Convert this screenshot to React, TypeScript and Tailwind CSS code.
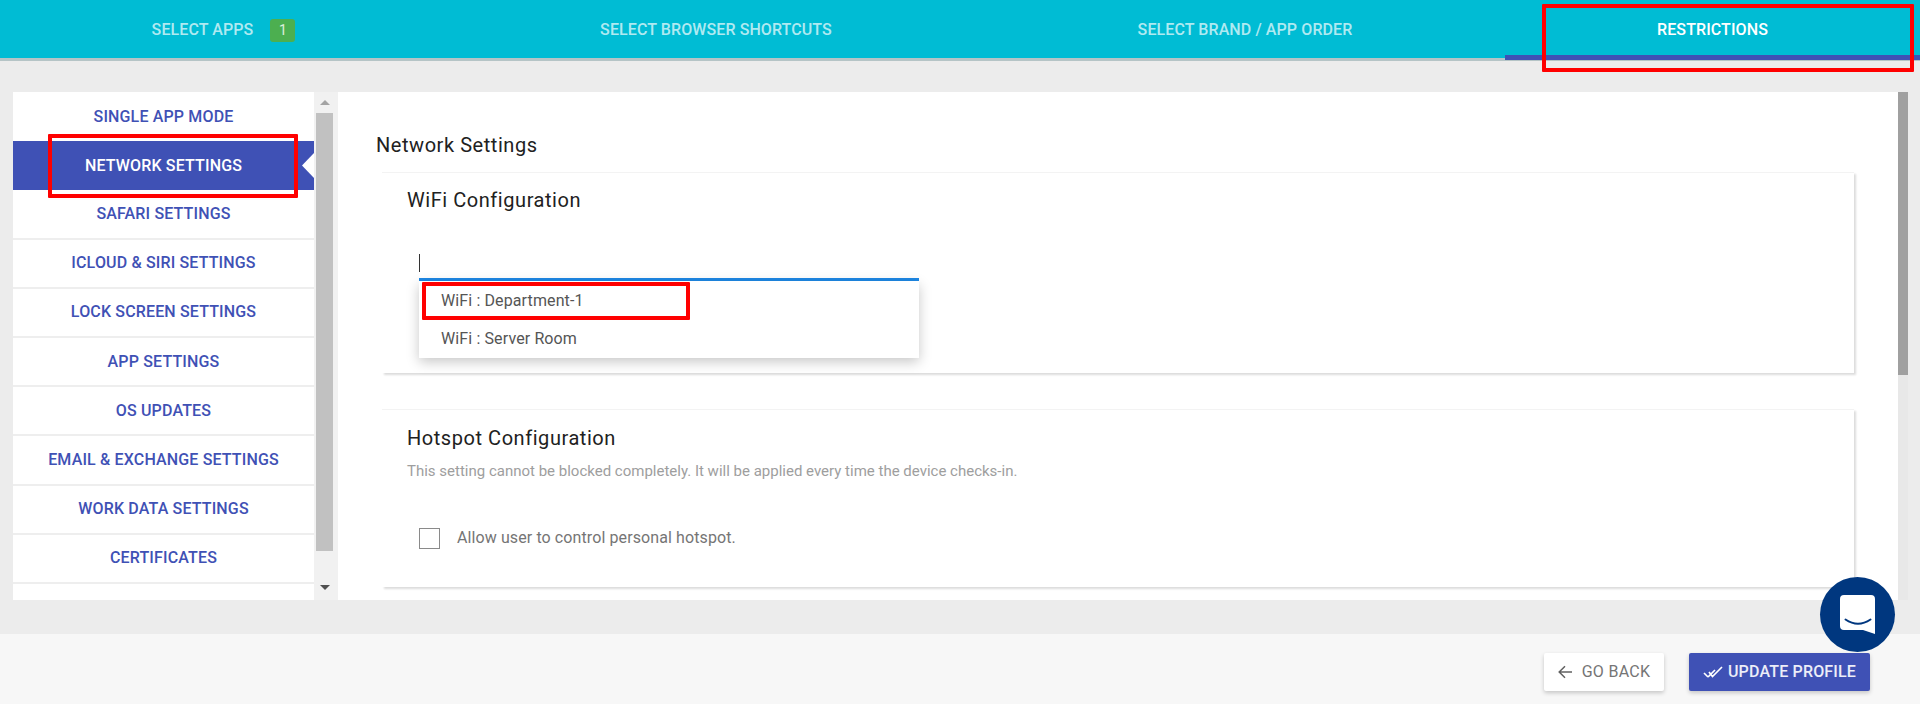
import React from "react";

const items = [
  "Single App Mode",
  "Network Settings",
  "Safari Settings",
  "iCloud & Siri Settings",
  "Lock Screen Settings",
  "App Settings",
  "OS Updates",
  "Email & Exchange Settings",
  "Work Data Settings",
  "Certificates",
];

function Tab({ label, w, active, badge }: { label: string; w: string; active?: boolean; badge?: boolean }) {
  return (
    <div className={`${w} h-[61px] flex items-start justify-center pt-[20px] relative`}>
      <span className={`text-[16px] tracking-[0.1px] leading-[20px] font-medium uppercase ${active ? "text-white" : "text-white/70"}`}>{label}</span>
      {badge && (
        <span className="ml-[17px] -mt-[1px] w-[25px] h-[23px] rounded-[3px] bg-[#4caf50] text-white/80 text-[14px] flex items-center justify-center">1</span>
      )}
      {active && <div className="absolute left-0 right-0 top-[55px] h-[5px] bg-[#3f51b5]" />}
    </div>
  );
}

function Mark({ className }: { className: string }) {
  return <div className={`absolute border-[4px] border-[#ff0000] rounded-[1px] ${className}`} />;
}

export default function App() {
  return (
    <div className="relative w-[1920px] h-[704px] overflow-hidden bg-[#ececec] font-['Roboto',sans-serif] flex flex-col">
      <header className="flex h-[61px] bg-[#00bcd4] border-b-[3px] border-[#b5c4c6] box-border">
        <Tab label="Select Apps" w="w-[447px]" badge />
        <Tab label="Select Browser Shortcuts" w="w-[538px]" />
        <Tab label="Select Brand / App Order" w="w-[520px]" />
        <Tab label="Restrictions" w="w-[415px]" active />
      </header>

      <main className="mt-[31px] h-[508px] flex ml-[13px] w-[1895px]">
        <nav className="w-[301px] bg-white overflow-hidden">
          {items.map((it, i) => (
            <div
              key={it}
              className={`relative h-[49.2px] flex items-center justify-center text-[16px] tracking-[0.15px] font-medium uppercase ${
                i === 1 ? "bg-[#3f51b5] text-white" : "text-[#3f51b5]"
              } ${i >= 2 ? "border-b-2 border-[#eeeeee]" : ""}`}
            >
              {it}
              {i === 1 && (
                <svg className="absolute right-0 top-[12px]" width="12" height="25" viewBox="0 0 12 25">
                  <path d="M12 0L0 12.5L12 25Z" fill="#fff" />
                </svg>
              )}
            </div>
          ))}
        </nav>

        <div className="w-[24px] bg-[#f1f1f1] pl-[2px] pr-[5px] flex flex-col items-center">
          <div className="h-[21px] w-full flex items-center justify-center">
            <div className="w-0 h-0 border-l-[5px] border-r-[5px] border-b-[5px] border-l-transparent border-r-transparent border-b-[#a3a3a3]" />
          </div>
          <div className="w-full h-[438px] bg-[#c1c1c1]" />
          <div className="flex-1 w-full flex items-end justify-center pb-[10px]">
            <div className="w-0 h-0 border-l-[5px] border-r-[5px] border-t-[5px] border-l-transparent border-r-transparent border-t-[#505050]" />
          </div>
        </div>

        <section className="flex-1 bg-white flex overflow-hidden">
          <div className="w-[1560px] pl-[38px]">
            <h2 className="mt-[41px] text-[20px] tracking-[0.55px] leading-[24px] text-[#212121]">Network Settings</h2>
            <div className="mt-[15px] ml-[6px] w-[1472px] h-[201px] bg-white border-t border-[#f3f3f3] shadow-[2px_2px_2px_rgba(0,0,0,0.14)] pl-[25px] pt-[15px]">
              <h3 className="text-[20px] tracking-[0.55px] leading-[24px] text-[#212121]">WiFi Configuration</h3>
              <div className="mt-[28px] ml-[12px] w-[500px] h-[41px] border-b-[3px] border-[#1e88e5] relative">
                <div className="absolute left-0 top-[14px] w-px h-[18px] bg-[#333]" />
              </div>
              <div className="ml-[12px] w-[500px] h-[77px] pt-[1px] bg-white shadow-[0_4px_12px_rgba(0,0,0,0.22)] text-[16px] tracking-[0.12px] text-[#555] pl-[22px] relative">
                <div className="h-[38px] flex items-center">WiFi : Department-1</div>
                <div className="h-[38px] flex items-center">WiFi : Server Room</div>
              </div>
            </div>
            <div className="mt-[36px] ml-[6px] w-[1472px] h-[178px] bg-white border-t border-[#f3f3f3] shadow-[2px_2px_2px_rgba(0,0,0,0.14)] pl-[25px] pt-[16px]">
              <h3 className="text-[20px] tracking-[0.55px] leading-[24px] text-[#212121]">Hotspot Configuration</h3>
              <p className="mt-[12px] text-[15px] leading-[18px] text-[#9e9e9e]">
                This setting cannot be blocked completely. It will be applied every time the device checks-in.
              </p>
              <label className="mt-[46px] flex items-center ml-[12px]">
                <span className="w-[21px] h-[21px] border border-[#8a8a8a] bg-white" />
                <span className="ml-[17px] text-[16px] tracking-[0.1px] text-[#757575]">Allow user to control personal hotspot.</span>
              </label>
            </div>
          </div>
          <div className="w-[10px] bg-[#e8e8e8]">
            <div className="h-[283px] bg-[#a0a0a0]" />
          </div>
        </section>
      </main>

      <footer className="mt-[34px] h-[70px] bg-[#f7f7f7] flex justify-end items-start pt-[19px] pr-[50px] gap-[25px]">
        <button className="w-[120px] h-[38px] bg-white rounded-[2px] shadow-[0_2px_4px_rgba(0,0,0,0.2)] flex items-center justify-center text-[16px] tracking-[0.3px] text-[#757575]">
          <svg width="14" height="14" viewBox="0 0 14 14" fill="none" stroke="#616161" strokeWidth="1.5" className="mr-[10px]">
            <path d="M14 7H1.5M7 1.2L1.2 7L7 12.8" />
          </svg>
          GO BACK
        </button>
        <button className="w-[181px] h-[38px] bg-[#3f51b5] rounded-[2px] shadow-[0_2px_4px_rgba(0,0,0,0.2)] flex items-center justify-center text-[16px] tracking-[0.17px] font-medium text-white/90">
          <svg width="20" height="14" viewBox="0 0 20 14" fill="none" stroke="#fff" strokeWidth="1.7" className="mr-[5px]">
            <path d="M1 8l4 4M5 12L12 5M6 7l3.5 4.5L19 2" />
          </svg>
          UPDATE PROFILE
        </button>
      </footer>

      <Mark className="left-[1542px] top-[4px] w-[372px] h-[68px]" />
      <Mark className="left-[48px] top-[134px] w-[250px] h-[64px]" />
      <Mark className="left-[422px] top-[282px] w-[268px] h-[38px]" />

      <div className="absolute left-[1820px] top-[577px] w-[75px] h-[75px] rounded-full bg-[#00377f] flex items-center justify-center">
        <svg width="35" height="40" viewBox="0 0 35 40">
          <path d="M4 0H31a4 4 0 0 1 4 4V39L23 35H4a4 4 0 0 1-4-4V4a4 4 0 0 1 4-4Z" fill="#fff" />
          <path d="M5.5 24.5q12.5 8.5 25 0" fill="none" stroke="#00377f" strokeWidth="2" strokeLinecap="round" />
        </svg>
      </div>
    </div>
  );
}
